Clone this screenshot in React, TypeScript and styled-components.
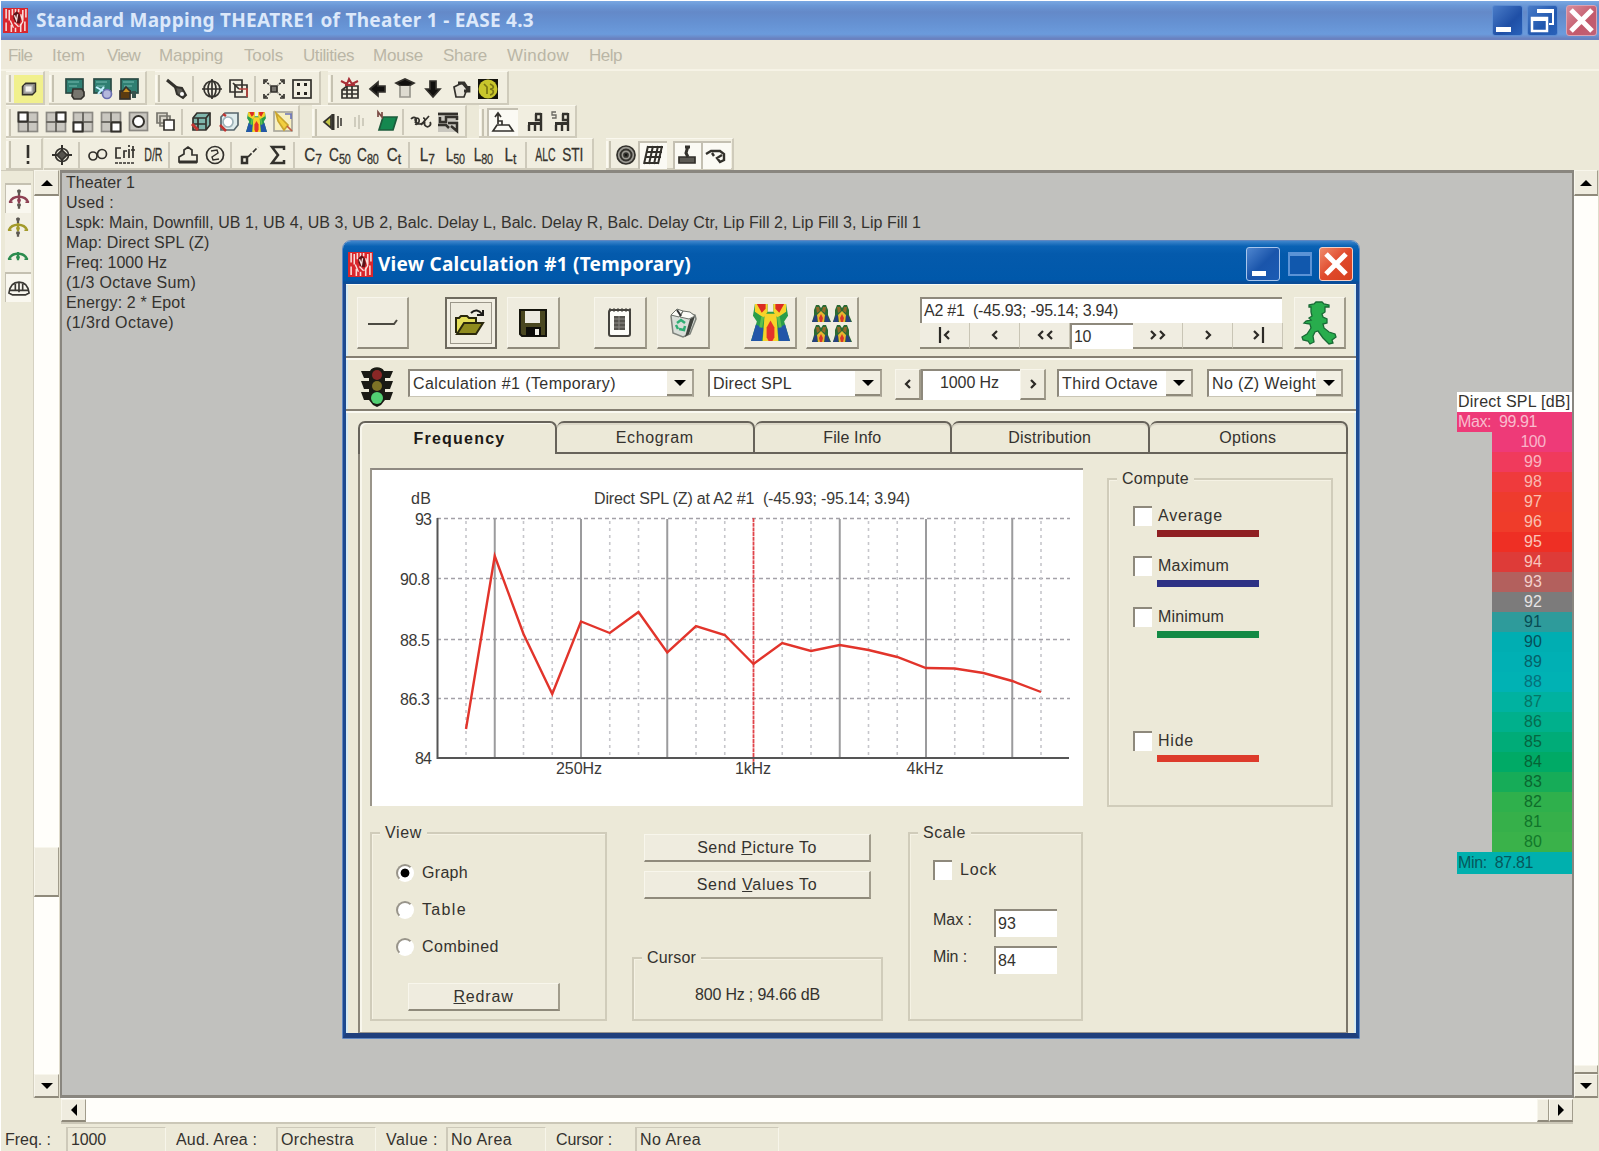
import React from "react";
import styled, { createGlobalStyle, css } from "styled-components";

const Global = createGlobalStyle`
  * { box-sizing: border-box; }
  body { margin: 0; background: #fff; overflow: hidden; }
  svg { display: block; flex: none; overflow: visible; }
`;

const FACE = "#ece9d8";
const UI_FONT = '"Liberation Sans", Arial, sans-serif';
const TITLE_FONT = '"Noto Sans", "Open Sans", sans-serif';

const ruler = document.createElement("canvas").getContext("2d")!;

/* Letter spacing that makes a text run as wide as the bitmap UI font would. */
function tracking(text: string, width: number, size: number, family: string, bold?: boolean) {
  ruler.font = `${bold ? "bold " : ""}${size}px ${family}`;
  return (width - ruler.measureText(text).width) / text.length;
}

const Run = styled.span<{ $size: number; $family: string; $bold?: boolean; $track: number; $color: string }>`
  font: ${(p) => (p.$bold ? "bold" : "normal")} ${(p) => p.$size}px/20px ${(p) => p.$family};
  letter-spacing: ${(p) => p.$track}px;
  color: ${(p) => p.$color};
  white-space: pre;
  flex: none;
`;

type TextProps = { text: string; w: number; size?: number; family?: string; bold?: boolean; color?: string; accel?: string };

function Text({ text, w, size = 16, family = UI_FONT, bold, color = "#34322e", accel }: TextProps) {
  const at = accel ? text.indexOf(accel) : -1;
  return (
    <Run $size={size} $family={family} $bold={bold} $color={color} $track={tracking(text, w, size, family, bold)}>
      {at < 0 ? text : (
        <>
          {text.slice(0, at)}
          <u>{accel}</u>
          {text.slice(at + 1)}
        </>
      )}
    </Run>
  );
}

/* ---------- shared pieces ---------- */

const Gap = styled.div<{ $w?: number; $h?: number }>`
  flex: none;
  width: ${(p) => p.$w ?? 0}px;
  height: ${(p) => p.$h ?? 0}px;
`;

const raised = css`
  background: #efecdf;
  border: 1px solid #f8f6ec;
  border-right: 2px solid #a19c8c;
  border-bottom: 2px solid #8f8a7b;
`;

const sunken = css`
  background: #fff;
  border: 0 solid #8e897c;
  border-top-width: 2px;
  border-left-width: 2px;
`;

const Button = styled.div<{ $w: number; $h: number }>`
  ${raised}
  width: ${(p) => p.$w}px;
  height: ${(p) => p.$h}px;
  flex: none;
  display: flex;
  align-items: center;
  justify-content: center;
`;

const Field = styled.div<{ $w: number; $h: number; $center?: boolean }>`
  ${sunken}
  width: ${(p) => p.$w}px;
  height: ${(p) => p.$h}px;
  flex: none;
  display: flex;
  align-items: center;
  justify-content: ${(p) => (p.$center ? "center" : "flex-start")};
  padding: ${(p) => (p.$center ? "0 4px 5px 0" : "0 0 0 2px")};
`;

const Arrow = styled.i<{ $dir: "up" | "down" | "left" | "right" }>`
  width: 0;
  height: 0;
  border: 6px solid transparent;
  ${(p) => p.$dir === "up" && "border-bottom-color:#000;border-top:0;"}
  ${(p) => p.$dir === "down" && "border-top-color:#000;border-bottom:0;"}
  ${(p) => p.$dir === "left" && "border-right-color:#000;border-left:0;"}
  ${(p) => p.$dir === "right" && "border-left-color:#000;border-right:0;"}
`;

const ComboBox = styled.div<{ $w: number }>`
  ${sunken}
  border-right: 2px solid #a8a394;
  border-bottom: 1px solid #c9c5b5;
  width: ${(p) => p.$w}px;
  height: 28px;
  flex: none;
  display: flex;
  align-items: center;
  justify-content: space-between;
  padding-left: 3px;
  overflow: hidden;
`;

const ComboArrow = styled.div`
  width: 25px;
  height: 25px;
  display: flex;
  align-items: center;
  justify-content: center;
  background: #f1eee2;
  border-bottom: 2px solid #8f8a7b;
`;

function Combo({ w, text, tw }: { w: number; text: string; tw: number }) {
  return (
    <ComboBox $w={w}>
      <Text text={text} w={tw} />
      <ComboArrow><Arrow $dir="down" /></ComboArrow>
    </ComboBox>
  );
}

const AppIcon = ({ size }: { size: number }) => (
  <svg width={size} height={size} viewBox="0 0 24 24">
    <rect width="24" height="24" fill="#d9262c" />
    <path d="M3 1v9M6 2v10M3 14v8M9 1v6M8 16v7M12 1v4M15 1v3M19 2v10M22 1v8M21 13v9M17 15v8M12 19v4" stroke="#f7dcd8" strokeWidth="1.5" fill="none" />
    <path d="M10 6l3-3 3 3 1 5-1 4-4-1-2-4z" fill="#5c1418" />
    <path d="M11 7l2 5 1-6M11 14l4 4M7 12l3 7M17 6l2 7-3 5" stroke="#f5e3df" strokeWidth="1.3" fill="none" />
  </svg>
);

/* ---------- main window frame ---------- */

const Window = styled.div`
  width: 1599px;
  height: 1151px;
  padding: 1px 0 0 1px;
  background: ${FACE};
  box-shadow: inset 1px 1px 0 #fff;
  display: flex;
  flex-direction: column;
  font-family: ${UI_FONT};
`;

const TitleBar = styled.div`
  height: 39px;
  flex: none;
  display: flex;
  align-items: center;
  padding: 0 2px 1px 2px;
  gap: 4px;
  background: linear-gradient(#7aa8e2 0, #6a97d6 12%, #6489c8 28%, #6591d2 55%, #6b9bdc 85%, #6a82c0 96%);
`;

const Push = styled.div`
  flex: 1;
`;

const CaptionButton = styled.div<{ $s: number; $bg: string; $edge: string }>`
  width: ${(p) => p.$s}px;
  height: ${(p) => p.$s}px;
  flex: none;
  border-radius: 3px;
  border: 1px solid ${(p) => p.$edge};
  background: ${(p) => p.$bg};
  display: flex;
  align-items: center;
  justify-content: center;
`;

const MenuBar = styled.div`
  height: 31px;
  flex: none;
  display: flex;
  align-items: center;
  padding: 3px 0 0 7px;
  background: #eeeadb;
  border-bottom: 2px solid #f6f3e6;
`;

const MenuItem = styled.div<{ $w: number }>`
  width: ${(p) => p.$w}px;
  flex: none;
`;

const MENU: [string, number, number][] = [
  ["File", 24, 44], ["Item", 33, 55], ["View", 33, 52], ["Mapping", 64, 85], ["Tools", 39, 59],
  ["Utilities", 51, 70], ["Mouse", 50, 70], ["Share", 44, 64], ["Window", 62, 82], ["Help", 33, 50],
];

/* ---------- toolbars ---------- */

const ToolRow = styled.div<{ $h: number }>`
  height: ${(p) => p.$h}px;
  flex: none;
  display: flex;
  padding-left: 5px;
`;

const Bar = styled.div<{ $w: number; $ml?: number }>`
  width: ${(p) => p.$w}px;
  margin-left: ${(p) => p.$ml ?? 0}px;
  flex: none;
  height: 100%;
  display: flex;
  align-items: center;
  padding-top: 2px;
  background: #f1eee0;
  border-top: 1px solid #faf8ee;
  border-right: 2px solid #cfcbbb;
  border-bottom: 2px solid #cfcbbb;
`;

const Grip = styled.div`
  width: 5px;
  height: 27px;
  margin-right: 3px;
  flex: none;
  border-left: 2px solid #fbf9f0;
  border-right: 2px solid #c6c2b1;
`;

const Cell = styled.div<{ $pressed?: boolean; $bg?: string; $w?: number }>`
  width: ${(p) => p.$w ?? 27.7}px;
  height: 28px;
  flex: none;
  display: flex;
  align-items: center;
  justify-content: center;
  background: ${(p) => p.$bg ?? (p.$pressed ? "#fbfaf4" : "transparent")};
  box-shadow: ${(p) => (p.$pressed ? "inset 2px 2px 0 #c4c0b2" : "none")};
`;

const Sep = styled.div`
  width: 6px;
  height: 26px;
  flex: none;
  border-left: 2px solid #cdc9ba;
  margin-left: 1px;
`;

const Glyph = styled.span<{ $size?: number; $squeeze?: number }>`
  font: ${(p) => p.$size ?? 19}px/20px ${UI_FONT};
  color: #35332e;
  transform: scaleX(${(p) => p.$squeeze ?? 0.8});
  white-space: nowrap;
  -webkit-text-stroke: 0.3px #35332e;
  sub { font-size: 15px; letter-spacing: -0.5px; vertical-align: -3px; line-height: 0; }
`;

const Ico = ({ children, s = 22 }: { children: React.ReactNode; s?: number }) => (
  <svg width={s} height={s} viewBox="0 0 22 22" fill="none" stroke="#33312c" strokeWidth="1.7">{children}</svg>
);

const Screen = ({ tone }: { tone: number }) => (
  <Ico>
    <rect x="2" y="1" width="17" height="14" fill="#2f7f72" stroke="#2b4a44" />
    <path d="M4 4h11M5 8h8" stroke="#5fa89c" />
    {tone === 0 && <path d="M9 11h9l2 3v4l-3 3h-7l-2-3z" fill="#77756e" />}
    {tone === 1 && <><path d="M4 9l9 5M12 9l-6 7" stroke="#c3f0ff" strokeWidth="2" /><circle cx="15" cy="16" r="4.500" fill="#b4b7dc" stroke="#6a6eb0" /></>}
    {tone === 2 && <><rect x="1" y="13" width="10" height="8" fill="#5b3b10" /><path d="M3 14l4-5 5 5" fill="#c98e20" /><path d="M15 13v7" stroke="#37534c" strokeWidth="4" /></>}
  </Ico>
);

const Panes = ({ x, y }: { x: number; y: number }) => (
  <Ico>
    <rect x="1.500" y="1.500" width="19" height="19" fill="#c9c7c0" stroke="#8c8a84" />
    <path d="M11 1v20M1 11h20" stroke="#6e6c66" strokeWidth="2" />
    <rect x={x} y={y} width="9" height="9" fill="#fff" strokeWidth="2" />
  </Ico>
);

const HeatMap = ({ s }: { s: number }) => (
  <svg width={s} height={s * 0.95} viewBox="0 0 40 38">
    <path d="M4 0h13v8h6V0h13l2 12-4 6 6 20H0l6-20-4-6z" fill="#2a9d4a" />
    <path d="M0 38l5-17 8 4-2 13zM40 38l-5-17-8 4 2 13z" fill="#2356a8" />
    <path d="M4 0h13v8l-4 6-9-6zM36 0H23v8l4 6 9-6z" fill="#f6d32a" />
    <path d="M6 0h9v5l-4 4zM34 0h-9v5l4 4z" fill="#dc2b22" />
    <path d="M14 10h12l2 28H12z" fill="#f6d32a" />
    <path d="M20 17l4 7v10l-2 4h-4l-2-4V24z" fill="#e5342a" />
    <path d="M12 13l-2 11M28 13l2 11" stroke="#5fc04c" strokeWidth="3" />
  </svg>
);

const Chair = ({ tag }: { tag?: boolean }) => (
  <Ico>
    {tag && <path d="M6 1H2v3h4v3H2" strokeWidth="1.300" stroke="#6a6862" />}
    <path d="M18 2v18M12 3h6M13 3v6h5M12 12v8M6 14v6" strokeWidth="2.400" />
    <path d="M5 12.500h13" strokeWidth="3" />
  </Ico>
);

const Target = () => (
  <Ico><circle cx="11" cy="11" r="6.500" /><path d="M11 1v20M1 11h20" strokeWidth="2" /><path d="M11 6l5 5-5 5-5-5z" fill="#55534d" /></Ico>
);

function Toolbars() {
  return (
    <>
      <ToolRow $h={34}>
        <Bar $w={39}>
          <Grip />
          <Cell $bg="#f1f08c" $w={29}>
            <Ico s={18}><path d="M3 8l4-4h12v10l-4 4H3z" fill="#8d8b84" /><rect x="6" y="7" width="9" height="8" fill="#f6f5ee" stroke="#aaa" /></Ico>
          </Cell>
        </Bar>
        <Bar $w={98} $ml={4}>
          <Grip />
          <Gap $w={4} />
          <Cell><Screen tone={0} /></Cell>
          <Cell><Screen tone={1} /></Cell>
          <Cell><Screen tone={2} /></Cell>
        </Bar>
        <Bar $w={166} $ml={8}>
          <Grip />
          <Cell><Ico><path d="M1 2l11 9" strokeWidth="3" /><path d="M9 9l2 7 6 4 3-3-4-7z" strokeWidth="2" fill="#5a5852" /><circle cx="16" cy="16" r="2" fill="#fff" stroke="none" /></Ico></Cell>
          <Sep />
          <Cell><Ico><circle cx="11" cy="11" r="8" /><ellipse cx="11" cy="11" rx="4" ry="8" /><path d="M11 1v20M1 11h20" /></Ico></Cell>
          <Cell><Ico><path d="M2 2h12v12H2zM7 7h12v12H7z" /><path d="M11 11h8v8" stroke="#b8433f" /><path d="M5 5l6 6" /></Ico></Cell>
          <Sep />
          <Cell><Ico><path d="M1 6V2h4M17 2h4v4M1 16v4h4M21 16v4h-4" /><path d="M2 3l5 4M20 3l-5 4M2 19l5-4M20 19l-5-4" strokeDasharray="2 1" /><path d="M8 8h6v6H8z" fill="#77756f" /></Ico></Cell>
          <Cell><Ico><rect x="2" y="2" width="18" height="18" /><path d="M6 5h3v3H6zM13 5h3v3h-3zM6 14h3v3H6zM13 14h3v3h-3z" fill="#26241f" stroke="none" /></Ico></Cell>
        </Bar>
        <Bar $w={181} $ml={7}>
          <Grip />
          <Cell><Ico><path d="M3 12h16v8H3zM3 12l5-4h11v4M8 8v12M13 8v12M3 16h16" /><path d="M2 3l6 3 2-5 3 5 6-3M6 7h10" stroke="#a82f37" strokeWidth="2" /></Ico></Cell>
          <Cell><Ico><path d="M3 11l8-7v4h7v6h-7v4z" fill="#11100e" /></Ico></Cell>
          <Cell><Ico><path d="M2 5l9-4 9 4-5 3H7z" fill="#11100e" /><path d="M6 8v11h10V8" fill="#dedbd0" stroke="#99978d" /></Ico></Cell>
          <Cell><Ico><path d="M11 19l-7-8h4V3h6v8h4z" fill="#11100e" /></Ico></Cell>
          <Cell><Ico><path d="M4 9l8-4 5 6-3 8H6z" fill="#e8e5da" /><path d="M8 5h6l4 6M19 8v5h-5" strokeWidth="2.800" /></Ico></Cell>
          <Cell><Ico><rect x="1" y="1" width="20" height="20" fill="#14130c" stroke="none" /><circle cx="11" cy="11" r="9.500" fill="#c9c62c" stroke="none" /><path d="M7 6l3 3v7M13 6c5 2 4 5 0 5 5 1 4 5 0 6" stroke="#7b7714" /></Ico></Cell>
        </Bar>
      </ToolRow>
      <ToolRow $h={33}>
        <Bar $w={294}>
          <Grip />
          <Cell><Panes x={1.5} y={1.5} /></Cell>
          <Cell><Panes x={11.5} y={1.5} /></Cell>
          <Cell><Panes x={1.5} y={11.5} /></Cell>
          <Cell><Panes x={11.5} y={11.5} /></Cell>
          <Cell><Ico><rect x="1.500" y="1.500" width="18" height="18" fill="#c9c7c0" stroke="#8c8a84" /><circle cx="10.500" cy="10.500" r="5.500" fill="#fff" strokeWidth="2" /></Ico></Cell>
          <Cell><Ico><path d="M2 2h10v10H2zM5 5h10v10H5z" fill="#d8d5ca" stroke="#77756d" /><path d="M9 9h10v10H9z" fill="#fff" /></Ico></Cell>
          <Sep />
          <Cell><Ico><path d="M3 7l4-5h13v12l-4 5H3z" fill="#7fb6ac" /><path d="M3 7h13v12M16 7l4-5M8 7v12M3 13h13" /><path d="M2 13l6 6" stroke="#c23531" strokeWidth="3" /></Ico></Cell>
          <Cell><Ico><path d="M3 6l4-4h13v12l-4 5H3z" fill="#dfecec" stroke="#57666c" /><circle cx="10" cy="11" r="5" fill="#fff" stroke="#9fb4ba" /><path d="M2 14l6 6M5 3l3 2" stroke="#c23531" strokeWidth="2.500" /></Ico></Cell>
          <Cell><HeatMap s={21} /></Cell>
          <Cell><Ico><rect x="1" y="1" width="18" height="19" fill="#f7efc0" stroke="#aaa79c" /><path d="M3 2l12 12-4 5-6-9z" fill="#f2cf3f" stroke="#caa52c" /><path d="M12 3h6v5" stroke="#6b74b8" /><path d="M14 15l5 5" stroke="#c25a41" /></Ico></Cell>
        </Bar>
        <Bar $w={155} $ml={12}>
          <Grip />
          <Gap $w={-3} />
          <Cell $w={26}><Ico><path d="M2 11l7-6v12z" fill="#c5c748" /><path d="M11 3v16" strokeWidth="3" /><path d="M16 5v12M19 7v8" strokeWidth="1.500" /></Ico></Cell>
          <Cell><Ico><path d="M6 6v10M10 4v14M14 7v8" stroke="#cfccbd" strokeWidth="2" /></Ico></Cell>
          <Cell $w={27}><Ico><path d="M7 6h14l-4 13H3z" fill="#14884f" stroke="#1c5c3c" /><path d="M2 6V1l4 5V1" stroke="#7a4a44" /></Ico></Cell>
          <Sep />
          <Cell $w={26}><Ico><path d="M1 8c4-4 7 0 4 4M5 13c4 2 6-6 2-6s-1 6 3 6 7-6 3-6" /><path d="M11 14L19 5M15 11a3 3 0 1 0 5 0" /></Ico></Cell>
          <Cell><Ico><rect x="1" y="1" width="20" height="20" fill="#c8c6be" stroke="none" /><path d="M1 3h20M3 6v5h6V6h11v3M1 14h8l3 3M11 12h9v8l-6-5" strokeWidth="2.500" /></Ico></Cell>
        </Bar>
        <Bar $w={98} $ml={12}>
          <Grip />
          <Gap $w={-3} />
          <Cell $pressed $w={31}><Ico><path d="M1 20h20l-4-6H5zM6 13V3M3 6l3-4 3 4M6 10h4v4" /></Ico></Cell>
          <Gap $w={2} />
          <Cell><Chair /></Cell>
          <Cell $w={26}><Chair tag /></Cell>
        </Bar>
      </ToolRow>
      <ToolRow $h={32}>
        <Bar $w={37}>
          <Grip />
          <Cell><Ico><path d="M11 1v13M11 17v3" strokeWidth="2.600" /></Ico></Cell>
        </Bar>
        <Bar $w={550} $ml={1}>
          <Gap $w={4} />
          <Cell><Target /></Cell>
          <Gap $w={1} />
          <Sep />
          <Cell><Ico><circle cx="6" cy="12" r="4" /><circle cx="15" cy="10" r="4.500" /></Ico></Cell>
          <Cell><Ico><path d="M7 4H2v10h5M10 14V7h3M15 5v9M15 1v2M19 2v12M17 6h4" /><path d="M1 19h20" strokeDasharray="3 1" /></Ico></Cell>
          <Cell><Glyph $size={19} $squeeze={0.56}>D/R</Glyph></Cell>
          <Sep />
          <Cell><Ico><path d="M2 18v-5l5-3V6l4-3 4 3v5h5v7z" /><path d="M2 18h18" strokeWidth="3" /></Ico></Cell>
          <Cell><Ico><circle cx="11" cy="11" r="8.500" /><path d="M7 7l6-1 1 3-6 4 1 3 6-1" strokeWidth="1.400" /></Ico></Cell>
          <Sep />
          <Cell><Ico><rect x="3" y="13" width="5" height="6" strokeWidth="2.500" /><path d="M9 13L19 3" strokeDasharray="5 2" /></Ico></Cell>
          <Cell><Ico><path d="M17 6V3H5l6 8-6 8h12v-3" strokeWidth="2.500" /></Ico></Cell>
          <Sep />
          <Cell><Glyph>C<sub>7</sub></Glyph></Cell>
          <Cell><Glyph $squeeze={0.72}>C<sub>50</sub></Glyph></Cell>
          <Cell><Glyph $squeeze={0.72}>C<sub>80</sub></Glyph></Cell>
          <Cell $w={25}><Glyph>C<sub>t</sub></Glyph></Cell>
          <Sep />
          <Cell><Glyph>L<sub>7</sub></Glyph></Cell>
          <Cell><Glyph $squeeze={0.72}>L<sub>50</sub></Glyph></Cell>
          <Cell><Glyph $squeeze={0.72}>L<sub>80</sub></Glyph></Cell>
          <Cell><Glyph>L<sub>t</sub></Glyph></Cell>
          <Sep />
          <Cell $w={29}><Glyph $size={19} $squeeze={0.55}>ALC</Glyph></Cell>
          <Cell $w={24}><Glyph $size={19} $squeeze={0.72}>STI</Glyph></Cell>
        </Bar>
        <Bar $w={128} $ml={12}>
          <Grip />
          <Gap $w={-3} />
          <Cell $w={24}><Ico><circle cx="11" cy="11" r="9" fill="#9b9992" /><circle cx="11" cy="11" r="5.500" strokeWidth="2" /><circle cx="11" cy="11" r="2" fill="#111" /></Ico></Cell>
          <Cell $pressed $w={29}><Ico><path d="M6 2L2 20M11 2L7 20M16 2l-4 18M20 2l-4 18M5 3h16M4 8h16M3 13h16M2 19h15" strokeWidth="2" /></Ico></Cell>
          <Gap $w={6} />
          <Cell $pressed $w={28}><Ico><path d="M3 13h16v6H3z" fill="#5c5a54" /><path d="M12 2l-2 7 2 4M9 3h5" strokeWidth="3" /></Ico></Cell>
          <Cell $pressed $w={30}><Ico><path d="M1 10l5-3h9l4 3v6l-4 2-3-4 5-3M7 9l2 3" strokeWidth="2.400" /></Ico></Cell>
        </Bar>
      </ToolRow>
    </>
  );
}

/* ---------- body: side tools, scrollbars, map canvas ---------- */

const Body = styled.div`
  height: 928px;
  flex: none;
  display: flex;
`;

const SideTools = styled.div`
  width: 33px;
  flex: none;
  display: flex;
  flex-direction: column;
  padding: 12px 2px 0 4px;
  border-top: 1px solid #cfcbbb;
  border-right: 1px solid #d5d1c1;
`;

const SideCell = styled.div<{ $h: number; $pressed?: boolean }>`
  height: ${(p) => p.$h}px;
  display: flex;
  align-items: center;
  justify-content: center;
  background: ${(p) => (p.$pressed ? "#f9f7ef" : "#f2efe3")};
  border-top: ${(p) => (p.$pressed ? "2px solid #c4c0b1" : "0")};
  border-left: ${(p) => (p.$pressed ? "1px solid #c4c0b1" : "0")};
`;

const Balance = ({ color, lower }: { color: string; lower: boolean }) => (
  <svg width="22" height="21" viewBox="0 0 24 22" fill="none">
    {lower && <path d="M12 0v6M10 2h4M12 15v6M10 17h4" stroke="#5d5852" strokeWidth="2.500" />}
    <path d="M2 14c2-5 6-6 10-6s8 1 10 6" stroke={color} strokeWidth="2.600" />
    <path d="M12 6v9M10 12h4" stroke={color} strokeWidth="2.500" />
    <path d="M1 14h4M19 14h4" stroke={color} strokeWidth="1.500" />
  </svg>
);

const VScroll = styled.div<{ $w: number }>`
  width: ${(p) => p.$w}px;
  flex: none;
  display: flex;
  flex-direction: column;
  background: #fffefa;
  border-right: 1px solid #e0dccb;
`;

const ScrollButton = styled.div<{ $w?: number; $h: number }>`
  ${raised}
  border-right-width: 1px;
  width: ${(p) => (p.$w ? `${p.$w}px` : "auto")};
  height: ${(p) => p.$h}px;
  flex: none;
  display: flex;
  align-items: center;
  justify-content: center;
`;

const Canvas = styled.div`
  width: 1514px;
  flex: none;
  position: relative;
  background: #c1c1be;
  border: 2px solid #89867f;
  border-width: 3px 2px 3px 2px;
  padding: 0 0 0 4px;
`;

const Info = styled.div`
  display: flex;
  flex-direction: column;
`;

const INFO: [string, number][] = [
  ["Theater 1", 69],
  ["Used :", 48],
  ["Lspk: Main, Downfill, UB 1, UB 4, UB 3, UB 2, Balc. Delay L, Balc. Delay R, Balc. Delay Ctr, Lip Fill 2, Lip Fill 3, Lip Fill 1", 855],
  ["Map: Direct SPL (Z)", 144],
  ["Freq: 1000 Hz", 101],
  ["(1/3 Octave Sum)", 130],
  ["Energy: 2 * Epot", 119],
  ["(1/3rd Octave)", 108],
];

/* ---------- colour legend ---------- */

const LegendBox = styled.div`
  position: absolute;
  left: 1395px;
  top: 219px;
  width: 115px;
  display: flex;
  flex-direction: column;
  align-items: flex-end;
`;

const LegendHead = styled.div<{ $bg: string; $h: number }>`
  width: 115px;
  height: ${(p) => p.$h}px;
  background: ${(p) => p.$bg};
  display: flex;
  align-items: center;
  padding-left: 1px;
`;

const Swatch = styled.div<{ $bg: string }>`
  width: 80px;
  height: 20px;
  background: ${(p) => p.$bg};
  display: flex;
  align-items: center;
  justify-content: center;
  padding-left: 2px;
`;

const SCALE: [number, string, string][] = [
  [100, "#ee3a78", "#f9b4c8"], [99, "#f03a5c", "#f9b4c0"], [98, "#ef3a3c", "#f9b8b0"], [97, "#ee3b2d", "#fac0b0"],
  [96, "#ef3c2a", "#fac0b0"], [95, "#ee2f24", "#fbc4b8"], [94, "#de3b38", "#f8c4bc"], [93, "#b3605d", "#f3d0cc"],
  [92, "#7c7b7b", "#e6e4e4"], [91, "#2e9b9b", "#084c54"], [90, "#00aeb2", "#06505a"], [89, "#00b0b4", "#066068"],
  [88, "#00b2b4", "#06707a"], [87, "#00b2a0", "#067464"], [86, "#00b08c", "#066c50"], [85, "#00ac78", "#066440"],
  [84, "#00aa66", "#066436"], [83, "#16ac58", "#0a6630"], [82, "#2fb04c", "#0e6c2a"], [81, "#36b04a", "#10742a"],
  [80, "#3ab24a", "#12782a"],
];

const Legend = () => (
  <LegendBox>
    <LegendHead $bg="#fff" $h={20}><Text text="Direct SPL [dB]" w={113} /></LegendHead>
    <LegendHead $bg="#ee3a78" $h={20}><Text text="Max:  99.91" w={79} color="#f9bccd" /></LegendHead>
    {SCALE.map(([n, bg, fg]) => (
      <Swatch key={n} $bg={bg}><Text text={String(n)} w={n === 100 ? 25 : 18} color={fg} /></Swatch>
    ))}
    <LegendHead $bg="#00b0ae" $h={22}><Text text="Min:  87.81" w={75} color="#06585c" /></LegendHead>
  </LegendBox>
);

/* ---------- dialog ---------- */

const Dialog = styled.div`
  position: absolute;
  left: 280px;
  top: 67px;
  width: 1018px;
  height: 799px;
  border: 1px solid #5f86c0;
  border-radius: 9px 9px 0 0;
  background: ${FACE};
  display: flex;
  flex-direction: column;
  overflow: hidden;
`;

const DialogTitle = styled.div`
  height: 43px;
  flex: none;
  display: flex;
  align-items: center;
  padding: 3px 6px 0 5px;
  background: linear-gradient(#3f86cc 0, #0a62b4 12%, #045aac 30%, #0058aa 90%, #0a4d98 96%);
`;

const DialogBody = styled.div`
  flex: 1;
  display: flex;
  flex-direction: column;
  border: 3px solid #1d4a90;
  border-top: 0;
  border-bottom: 5px solid #1f3f7c;
  box-shadow: inset 2px 1px 0 #d6ebf4, inset -2px 0 0 #d6ebf4;
`;

const DialogRow = styled.div<{ $h: number }>`
  height: ${(p) => p.$h}px;
  flex: none;
  display: flex;
  align-items: flex-start;
  border-bottom: 2px solid #857f72;
  box-shadow: inset 0 1px 0 #fbfaf2, 0 2px 0 #fbfaf2;
`;

const OpenButton = styled(Button)`
  border: 2px solid #6e6a5e;
  box-shadow: inset 0 0 0 3px #f3f0e4, inset 0 0 0 4px #9b978a;
`;

const NavBlock = styled.div`
  width: 363px;
  flex: none;
`;

const NavLine = styled.div`
  display: flex;
`;

const NavButton = styled.div<{ $w: number }>`
  width: ${(p) => p.$w}px;
  height: 26px;
  flex: none;
  display: flex;
  align-items: center;
  justify-content: center;
  background: #f0ede1;
  border-right: 1px solid #c9c5b5;
  border-bottom: 2px solid #8f8a7b;
`;

const Chevron = ({ kind }: { kind: string }) => (
  <svg width="26" height="16" viewBox="0 0 26 16" fill="none" stroke="#2c2a26" strokeWidth="2.200">
    {kind === "first" && <path d="M8 0v16M17 4l-4 4 4 4" />}
    {kind === "prev" && <path d="M15 4l-4 4 4 4" />}
    {kind === "prev2" && <path d="M11 4L7 8l4 4M20 4l-4 4 4 4" />}
    {kind === "next2" && <path d="M6 4l4 4-4 4M15 4l4 4-4 4" />}
    {kind === "next" && <path d="M11 4l4 4-4 4" />}
    {kind === "last" && <path d="M9 4l4 4-4 4M18 0v16" />}
  </svg>
);

const FolderIcon = () => (
  <svg width="32" height="28" viewBox="0 0 32 28">
    <path d="M1 24V9h3l2-2h6l2 2h7v5" fill="#e4de5a" stroke="#2a280c" strokeWidth="2" />
    <path d="M2 25l7-11h19l-7 11z" fill="#8f8b1e" stroke="#2a280c" strokeWidth="2" />
    <path d="M16 4c4-4 8-3 11 1M28 1v5h-6" fill="none" stroke="#1c1b18" strokeWidth="2" />
  </svg>
);

const FloppyIcon = () => (
  <svg width="28" height="28" viewBox="0 0 28 28">
    <path d="M1 1h26v26H3l-2-2z" fill="#4a4720" stroke="#15140c" strokeWidth="2" />
    <rect x="6" y="2" width="15" height="12" fill="#eceae0" />
    <rect x="7" y="18" width="15" height="9" fill="#0d0c08" />
    <rect x="16" y="20" width="4" height="6" fill="#f2f0e6" />
  </svg>
);

const NotepadIcon = () => (
  <svg width="26" height="32" viewBox="0 0 26 32">
    <rect x="2" y="3" width="21" height="26" rx="2" fill="#fdfdf9" stroke="#45433e" strokeWidth="2" />
    <path d="M2 3h22" stroke="#45433e" strokeWidth="3" strokeDasharray="2 2" />
    <rect x="7" y="9" width="11" height="14" fill="#55534e" />
    <path d="M7 12h11M7 16h11M7 20h11M12 9v14" stroke="#8d8b85" />
  </svg>
);

const BinIcon = () => (
  <svg width="32" height="32" viewBox="0 0 32 32">
    <path d="M4 9l6-6 18 5 1 4-6 15-7 3-10-4z" fill="#d9ded8" stroke="#7e827c" strokeWidth="1.500" />
    <path d="M28 9l-6 18-4 3 5-18z" fill="#3f423d" />
    <path d="M4 8l6-6 6 2-4 6zM16 4l7 1 5 4-6 3-9-2z" fill="#fbfbf6" stroke="#6d716a" />
    <path d="M10 3l4 6" stroke="#333" strokeWidth="2" />
    <path d="M10 16l4-3 4 3M18 19l-1 4-5-1M9 18l2 4" fill="none" stroke="#2fae74" strokeWidth="2.500" />
  </svg>
);

const TrafficLight = () => (
  <svg width="32" height="40" viewBox="0 0 32 40">
    <path d="M0 4h9c2-5 12-5 14 0h9l-3 7h-5v3h8l-3 8h-5v3h8l-3 8h-5l-4 5-4 2-4-2-4-5H3l-3-8h8v-3H3l-3-8h8v-3H3z" fill="#1a1a14" />
    <circle cx="16" cy="8" r="5" fill="#8a2726" />
    <circle cx="16" cy="19" r="5" fill="#7d7226" />
    <circle cx="16" cy="31" r="6" fill="#52cf73" />
  </svg>
);

const WalkingMan = () => (
  <svg width="34" height="43" viewBox="0 0 34 43">
    <path d="M6 4l5-1 2-2h6l2 2 5 1v2h-4v5l-3 2 1 3 4 2v4l-4 1 1 4 5 4 6 2 1 3-4 3 1 3-4 1-6-6-5-7-3 1-2 4 1 6-4 2-2-3-5-1-1-3 5-3 4-6-1-4-6-1 2-2 5-1-2-2 3-2-1-4V6H6z" fill="#28ad4d" stroke="#186a35" strokeWidth="1.300" />
  </svg>
);

/* ---------- tabs ---------- */

const Tabs = styled.div`
  display: flex;
  flex: none;
  height: 33px;
  margin: 10px 8px 0 12px;
`;

const Tab = styled.div<{ $active?: boolean; $w: number }>`
  width: ${(p) => p.$w}px;
  flex: none;
  border: 2px solid #67635a;
  border-left-width: ${(p) => (p.$active ? 2 : 0)}px;
  border-bottom-width: ${(p) => (p.$active ? 0 : 2)}px;
  border-radius: 7px 7px 0 0;
  display: flex;
  align-items: center;
  justify-content: center;
  padding: ${(p) => (p.$active ? "1px 0 0 4px" : "0")};
  box-shadow: ${(p) => (p.$active ? "inset 2px 1px 0 #f8f6ec" : "inset 0 2px 0 #dcd8c8")};
`;

const TabPanel = styled.div`
  flex: 1;
  display: flex;
  gap: 24px;
  margin: 0 8px 0 12px;
  padding: 14px 0 0 10px;
  border-left: 2px solid #8b8679;
  border-right: 2px solid #7b766a;
  border-bottom: 1px solid #9a968f;
  box-shadow: inset 2px 0 0 #f8f6ec;
`;

const LeftPane = styled.div`
  width: 713px;
  flex: none;
  display: flex;
  flex-direction: column;
  gap: 26px;
`;

const ChartBox = styled.div`
  height: 338px;
  flex: none;
  background: #fff;
  border-top: 2px solid #8f8a82;
  border-left: 2px solid #9a958a;
`;

const Bottom = styled.div`
  height: 189px;
  display: flex;
  gap: 25px;
`;

const Group = styled.div<{ $w: number; $h: number; $pad: string }>`
  position: relative;
  flex: none;
  width: ${(p) => p.$w}px;
  height: ${(p) => p.$h}px;
  padding: ${(p) => p.$pad};
  border: 2px solid #d0ccba;
  box-shadow: inset 1px 1px 0 #f5f2e4;
  display: flex;
  flex-direction: column;
`;

const Caption = styled.div`
  position: absolute;
  left: 8px;
  top: -11px;
  height: 20px;
  padding: 0 5px;
  background: ${FACE};
`;

const Line = styled.div<{ $h: number }>`
  height: ${(p) => p.$h}px;
  flex: none;
  display: flex;
  align-items: center;
`;

const Check = styled.div<{ $mr: number }>`
  ${sunken}
  width: 19px;
  height: 20px;
  margin-right: ${(p) => p.$mr}px;
  flex: none;
`;

const Radio = styled.div<{ $on?: boolean }>`
  width: 18px;
  height: 18px;
  margin-right: 8px;
  flex: none;
  border-radius: 50%;
  border: 2px solid;
  border-color: #98948a #fff #fff #98948a;
  background: ${(p) => (p.$on ? "radial-gradient(circle, #000 4px, #fff 4.8px)" : "#fff")};
`;

const Stroke = styled.div<{ $c: string; $mb: number }>`
  width: 102px;
  height: 7px;
  margin: 4px 0 ${(p) => p.$mb}px 24px;
  flex: none;
  background: ${(p) => p.$c};
`;

const Middle = styled.div`
  width: 251px;
  display: flex;
  flex-direction: column;
  gap: 9px;
  padding-top: 2px;
`;

const Centered = styled.div`
  display: flex;
  justify-content: center;
`;

const Prompt = styled.div`
  width: 61px;
  flex: none;
  padding-bottom: 6px;
`;

/* ---------- response curve ---------- */

const CURVE = [729, 556, 634, 694, 621.5, 633, 612, 652.5, 626, 635, 664, 643, 651, 645, 650, 657, 668, 668.5, 673, 681, 692];
const bandX = (i: number) => 466 + i * 28.75;
const LEVELS: [string, number][] = [["93", 518.5], ["90.8", 578.5], ["88.5", 639.5], ["86.3", 698.5], ["84", 758]];
const HERTZ: [string, number, number][] = [["250Hz", 579, 46], ["1kHz", 753, 36], ["4kHz", 925, 37]];

const ChartSvg = styled.svg`
  font: 16px ${UI_FONT};
  text { fill: #3b3a38; }
`;

const Chart = () => (
  <ChartSvg width="711" height="336" viewBox="372 470 711 336">
    {LEVELS.slice(0, 4).map(([, y]) => (
      <line key={y} x1="437" x2="1070" y1={y} y2={y} stroke="#a3a1a8" strokeWidth="1.600" strokeDasharray="4 3" />
    ))}
    {CURVE.map((_, i) => {
      const x = bandX(i);
      if (i === 10) return <line key={i} x1={x} x2={x} y1="518" y2="765" stroke="#e0444a" strokeWidth="1.800" strokeDasharray="4 0.700" />;
      if (i % 3 === 1) return <line key={i} x1={x} x2={x} y1="519" y2="758" stroke="#9b9b9d" strokeWidth="2" />;
      return <line key={i} x1={x} x2={x} y1="521" y2="758" stroke="#c6c6cb" strokeWidth="1.600" strokeDasharray="3 4" />;
    })}
    <path d="M437.500 518V758H1069" fill="none" stroke="#555" strokeWidth="2" />
    <polyline points={CURVE.map((y, i) => `${bandX(i)},${y}`).join(" ")} fill="none" stroke="#e2342b" strokeWidth="2.400" />
    <text x="411" y="504" textLength="20">dB</text>
    <text x="594" y="504" textLength="316" xmlSpace="preserve">Direct SPL (Z) at A2 #1&#160; (-45.93; -95.14; 3.94)</text>
    {LEVELS.map(([t, y]) => {
      const w = t.length > 2 ? 30 : 17;
      return <text key={t} x={(t.length > 2 ? 430 : 432) - w} y={y + 6} textLength={w}>{t}</text>;
    })}
    {HERTZ.map(([t, x, w]) => (
      <text key={t} x={x - w / 2} y="774" textLength={w}>{t}</text>
    ))}
  </ChartSvg>
);

const COMPUTE: [string, number, string, number][] = [
  ["Average", 65, "#8f1f22", 19], ["Maximum", 71, "#2d3184", 20], ["Minimum", 66, "#138a45", 93], ["Hide", 36, "#dd3b2b", 0],
];

function CalculationDialog() {
  return (
    <Dialog>
      <DialogTitle>
        <AppIcon size={25} />
        <Gap $w={5} />
        <Text text="View Calculation #1 (Temporary)" w={313} size={19} family={TITLE_FONT} bold color="#fff" />
        <Push />
        <CaptionButton $s={34} $bg="linear-gradient(135deg,#4f86cf,#1a55ab 50%,#1c5cb4)" $edge="#a9c6ec">
          <svg width="30" height="30"><rect x="4" y="22" width="14" height="5" fill="#fff" /></svg>
        </CaptionButton>
        <Gap $w={8} />
        <svg width="24" height="24"><rect x="1" y="1" width="22" height="22" fill="#1158ad" stroke="#5b93d6" strokeWidth="2" /><path d="M1 3h22" stroke="#5b93d6" strokeWidth="2" /></svg>
        <Gap $w={7} />
        <CaptionButton $s={34} $bg="linear-gradient(135deg,#ef8a6a,#e0492c 50%,#d6401f)" $edge="#f6cfc4">
          <svg width="30" height="30"><path d="M5 5l20 20M25 5L5 25" stroke="#fff" strokeWidth="5" /></svg>
        </CaptionButton>
      </DialogTitle>
      <DialogBody>
        <DialogRow $h={74}>
          <Gap $w={11} />
          <Line $h={78}>
            <Button $w={52} $h={52}><svg width="32" height="12"><path d="M1 7h26l3-4" fill="none" stroke="#4c4a42" strokeWidth="2" /></svg></Button>
            <Gap $w={36} />
            <OpenButton $w={52} $h={52}><FolderIcon /></OpenButton>
            <Gap $w={10} />
            <Button $w={53} $h={52}><FloppyIcon /></Button>
            <Gap $w={34} />
            <Button $w={53} $h={52}><NotepadIcon /></Button>
            <Gap $w={10} />
            <Button $w={53} $h={52}><BinIcon /></Button>
            <Gap $w={34} />
            <Button $w={53} $h={52}><HeatMap s={39} /></Button>
            <Gap $w={9} />
            <Button $w={53} $h={52}>
              <svg width="40" height="38" viewBox="0 0 40 38">
                {[[0, 0], [21, 0], [0, 20], [21, 20]].map(([x, y]) => (
                  <g key={`${x}-${y}`} transform={`translate(${x} ${y})`}>
                    <path d="M2 6l2-5h3l2 3 2-3h3l2 5v5l3 7H0l2-7z" fill="#2b6a33" />
                    <path d="M0 18l3-7 3 1-1 6zM18 18l-3-7-3 1 1 6z" fill="#27407e" />
                    <path d="M4 3h3l1 4-3 2zM14 3h-3l-1 4 3 2z" fill="#8f6a2a" />
                    <path d="M9 7l4 4-1 7H6l-1-7z" fill="#e7b52e" />
                    <path d="M9 10l2 4-1 4H8l-1-4z" fill="#d8352a" />
                  </g>
                ))}
              </svg>
            </Button>
            <Gap $w={61} />
            <NavBlock>
              <Field $w={362} $h={26}><Text text="A2 #1  (-45.93; -95.14; 3.94)" w={194} /></Field>
              <NavLine>
                <NavButton $w={50}><Chevron kind="first" /></NavButton>
                <NavButton $w={50}><Chevron kind="prev" /></NavButton>
                <NavButton $w={50}><Chevron kind="prev2" /></NavButton>
                <Field $w={63} $h={26}><Text text="10" w={17} /></Field>
                <NavButton $w={50}><Chevron kind="next2" /></NavButton>
                <NavButton $w={50}><Chevron kind="next" /></NavButton>
                <NavButton $w={50}><Chevron kind="last" /></NavButton>
              </NavLine>
            </NavBlock>
            <Gap $w={11} />
            <Button $w={52} $h={52}><WalkingMan /></Button>
          </Line>
        </DialogRow>
        <DialogRow $h={53}>
          <Gap $w={15} />
          <Line $h={57}><TrafficLight /></Line>
          <Gap $w={15} />
          <Line $h={50}>
            <Combo w={286} text="Calculation #1 (Temporary)" tw={203} />
            <Gap $w={14} />
            <Combo w={174} text="Direct SPL" tw={79} />
          </Line>
          <Gap $w={13} />
          <Line $h={53}>
            <Button $w={26} $h={31}><Chevron kind="prev" /></Button>
            <Field $w={99} $h={31} $center><Text text="1000 Hz" w={59} /></Field>
            <Button $w={26} $h={31}><Chevron kind="next" /></Button>
          </Line>
          <Gap $w={11} />
          <Line $h={50}>
            <Combo w={136} text="Third Octave" tw={96} />
            <Gap $w={14} />
            <Combo w={136} text="No (Z) Weight" tw={104} />
          </Line>
        </DialogRow>
        <Tabs>
          <Tab $active $w={199}><Text text="Frequency" w={92} bold color="#1c1a17" /></Tab>
          <Tab $w={197.5}><Text text="Echogram" w={78} /></Tab>
          <Tab $w={197.5}><Text text="File Info" w={58} /></Tab>
          <Tab $w={197.5}><Text text="Distribution" w={83} /></Tab>
          <Tab $w={198.5}><Text text="Options" w={57} /></Tab>
        </Tabs>
        <TabPanel>
          <LeftPane>
            <ChartBox><Chart /></ChartBox>
            <Bottom>
              <Group $w={237} $h={189} $pad="20px 0 0 24px">
                <Caption><Text text="View" w={37} /></Caption>
                <Line $h={37}><Radio $on /><Text text="Graph" w={46} /></Line>
                <Line $h={37}><Radio /><Text text="Table" w={45} /></Line>
                <Line $h={37}><Radio /><Text text="Combined" w={77} /></Line>
                <Gap $h={18} />
                <NavLine><Gap $w={12} /><Button $w={152} $h={28}><Text text="Redraw" w={60} accel="R" /></Button></NavLine>
              </Group>
              <Middle>
                <Centered><Button $w={227} $h={28}><Text text="Send Picture To" w={120} accel="P" /></Button></Centered>
                <Centered><Button $w={227} $h={28}><Text text="Send Values To" w={121} accel="V" /></Button></Centered>
                <Gap $h={40} />
                <Group $w={251} $h={64} $pad="26px 0 0 0">
                  <Caption><Text text="Cursor" w={49} /></Caption>
                  <Centered><Text text="800 Hz ; 94.66 dB" w={125} /></Centered>
                </Group>
              </Middle>
              <Group $w={175} $h={189} $pad="25px 0 0 23px">
                <Caption><Text text="Scale" w={43} /></Caption>
                <Line $h={22}><Check $mr={8} /><Text text="Lock" w={37} /></Line>
                <Gap $h={28} />
                <Line $h={28}><Prompt><Text text="Max :" w={39} /></Prompt><Field $w={63} $h={28}><Text text="93" w={18} /></Field></Line>
                <Gap $h={9} />
                <Line $h={28}><Prompt><Text text="Min :" w={34} /></Prompt><Field $w={63} $h={28}><Text text="84" w={18} /></Field></Line>
              </Group>
            </Bottom>
          </LeftPane>
          <div>
            <Gap $h={10} />
            <Group $w={226} $h={329} $pad="26px 0 0 24px">
              <Caption><Text text="Compute" w={67} /></Caption>
              {COMPUTE.map(([name, w, color, mb]) => (
                <React.Fragment key={name}>
                  <Line $h={20}><Check $mr={6} /><Text text={name} w={w} /></Line>
                  <Stroke $c={color} $mb={mb} />
                </React.Fragment>
              ))}
            </Group>
          </div>
        </TabPanel>
      </DialogBody>
    </Dialog>
  );
}

/* ---------- bottom ---------- */

const HScroll = styled.div`
  height: 26px;
  flex: none;
  margin-left: 60px;
  width: 1512px;
  display: flex;
  padding-top: 1px;
  background: #fffefa;
  border-bottom: 2px solid #cbc7b7;
`;

const StatusBar = styled.div`
  flex: 1;
  display: flex;
  align-items: center;
  padding: 3px 0 0 4px;
`;

const StatusLabel = styled.div<{ $w: number }>`
  width: ${(p) => p.$w}px;
  flex: none;
`;

const StatusField = styled.div<{ $w: number; $mr?: number }>`
  width: ${(p) => p.$w}px;
  height: 25px;
  margin-right: ${(p) => p.$mr ?? 10}px;
  padding: 2px 0 0 3px;
  flex: none;
  border: 1px solid #cdc9b9;
  border-left-width: 2px;
  border-right-color: #f7f5ea;
  border-bottom-color: #f7f5ea;
`;

export default function App() {
  return (
    <Window>
      <Global />
      <TitleBar>
        <AppIcon size={25} />
        <Gap $w={0} />
        <Text text="Standard Mapping THEATRE1 of Theater 1 - EASE 4.3" w={498} size={19} family={TITLE_FONT} bold color="#dce8fa" />
        <Push />
        <CaptionButton $s={31} $bg="linear-gradient(135deg,#4a7cc8,#1f4fa6 60%,#2a62ba)" $edge="#5b8cd2">
          <svg width="29" height="29"><rect x="3" y="21" width="15" height="5" fill="#fff" /></svg>
        </CaptionButton>
        <CaptionButton $s={31} $bg="linear-gradient(135deg,#4a7cc8,#2157ae 60%,#2a62ba)" $edge="#5b8cd2">
          <svg width="27" height="27" fill="none" stroke="#fff"><path d="M9 3h15v14h-4" strokeWidth="2" /><path d="M8 4h17M2 12h17" strokeWidth="4" /><path d="M3 11h15v13H3z" strokeWidth="2.500" /></svg>
        </CaptionButton>
        <Gap />
        <CaptionButton $s={31} $bg="linear-gradient(135deg,#d98c9a,#c35a6c 60%,#bf6076)" $edge="#d9a3b4">
          <svg width="27" height="27"><path d="M3 3l21 21M24 3L3 24" stroke="#fff" strokeWidth="5" /></svg>
        </CaptionButton>
      </TitleBar>
      <MenuBar>
        {MENU.map(([name, tw, w]) => (
          <MenuItem key={name} $w={w}><Text text={name} w={tw} color="#bab6a6" size={17} /></MenuItem>
        ))}
      </MenuBar>
      <Toolbars />
      <Body>
        <SideTools>
          <SideCell $h={30} $pressed><Balance color="#8e4154" lower /></SideCell>
          <SideCell $h={28}><Balance color="#a39a2b" lower /></SideCell>
          <SideCell $h={31}><Balance color="#2c8c4e" lower={false} /></SideCell>
          <SideCell $h={30} $pressed>
            <svg width="22" height="15" viewBox="0 0 24 16" fill="none" stroke="#3a3833" strokeWidth="1.800"><path d="M1 13C2 5 6 1 12 1s10 4 11 12l-4 2H5zM12 1v11M8 3v7h8V3M2 10h6M16 10h6" /></svg>
          </SideCell>
        </SideTools>
        <VScroll $w={26}>
          <ScrollButton $h={26}><Arrow $dir="up" /></ScrollButton>
          <Gap $h={651} />
          <ScrollButton $h={50} />
          <Push />
          <ScrollButton $h={24}><Arrow $dir="down" /></ScrollButton>
        </VScroll>
        <Canvas>
          <Info>
            {INFO.map(([t, w]) => <Text key={t} text={t} w={w} />)}
          </Info>
          <Legend />
          <CalculationDialog />
        </Canvas>
        <VScroll $w={25}>
          <ScrollButton $h={26}><Arrow $dir="up" /></ScrollButton>
          <Push />
          <ScrollButton $h={9} />
          <ScrollButton $h={24}><Arrow $dir="down" /></ScrollButton>
        </VScroll>
      </Body>
      <HScroll>
        <ScrollButton $w={25} $h={23}><Arrow $dir="left" /></ScrollButton>
        <Push />
        <ScrollButton $w={12} $h={23} />
        <ScrollButton $w={24} $h={23}><Arrow $dir="right" /></ScrollButton>
      </HScroll>
      <StatusBar>
        <StatusLabel $w={61}><Text text="Freq. :" w={46} /></StatusLabel>
        <StatusField $w={100}><Text text="1000" w={35} /></StatusField>
        <StatusLabel $w={100}><Text text="Aud. Area :" w={82} /></StatusLabel>
        <StatusField $w={100}><Text text="Orchestra" w={73} /></StatusField>
        <StatusLabel $w={60}><Text text="Value :" w={52} /></StatusLabel>
        <StatusField $w={100}><Text text="No Area" w={62} /></StatusField>
        <StatusLabel $w={79}><Text text="Cursor :" w={56} /></StatusLabel>
        <StatusField $w={144}><Text text="No Area" w={62} /></StatusField>
      </StatusBar>
    </Window>
  );
}
